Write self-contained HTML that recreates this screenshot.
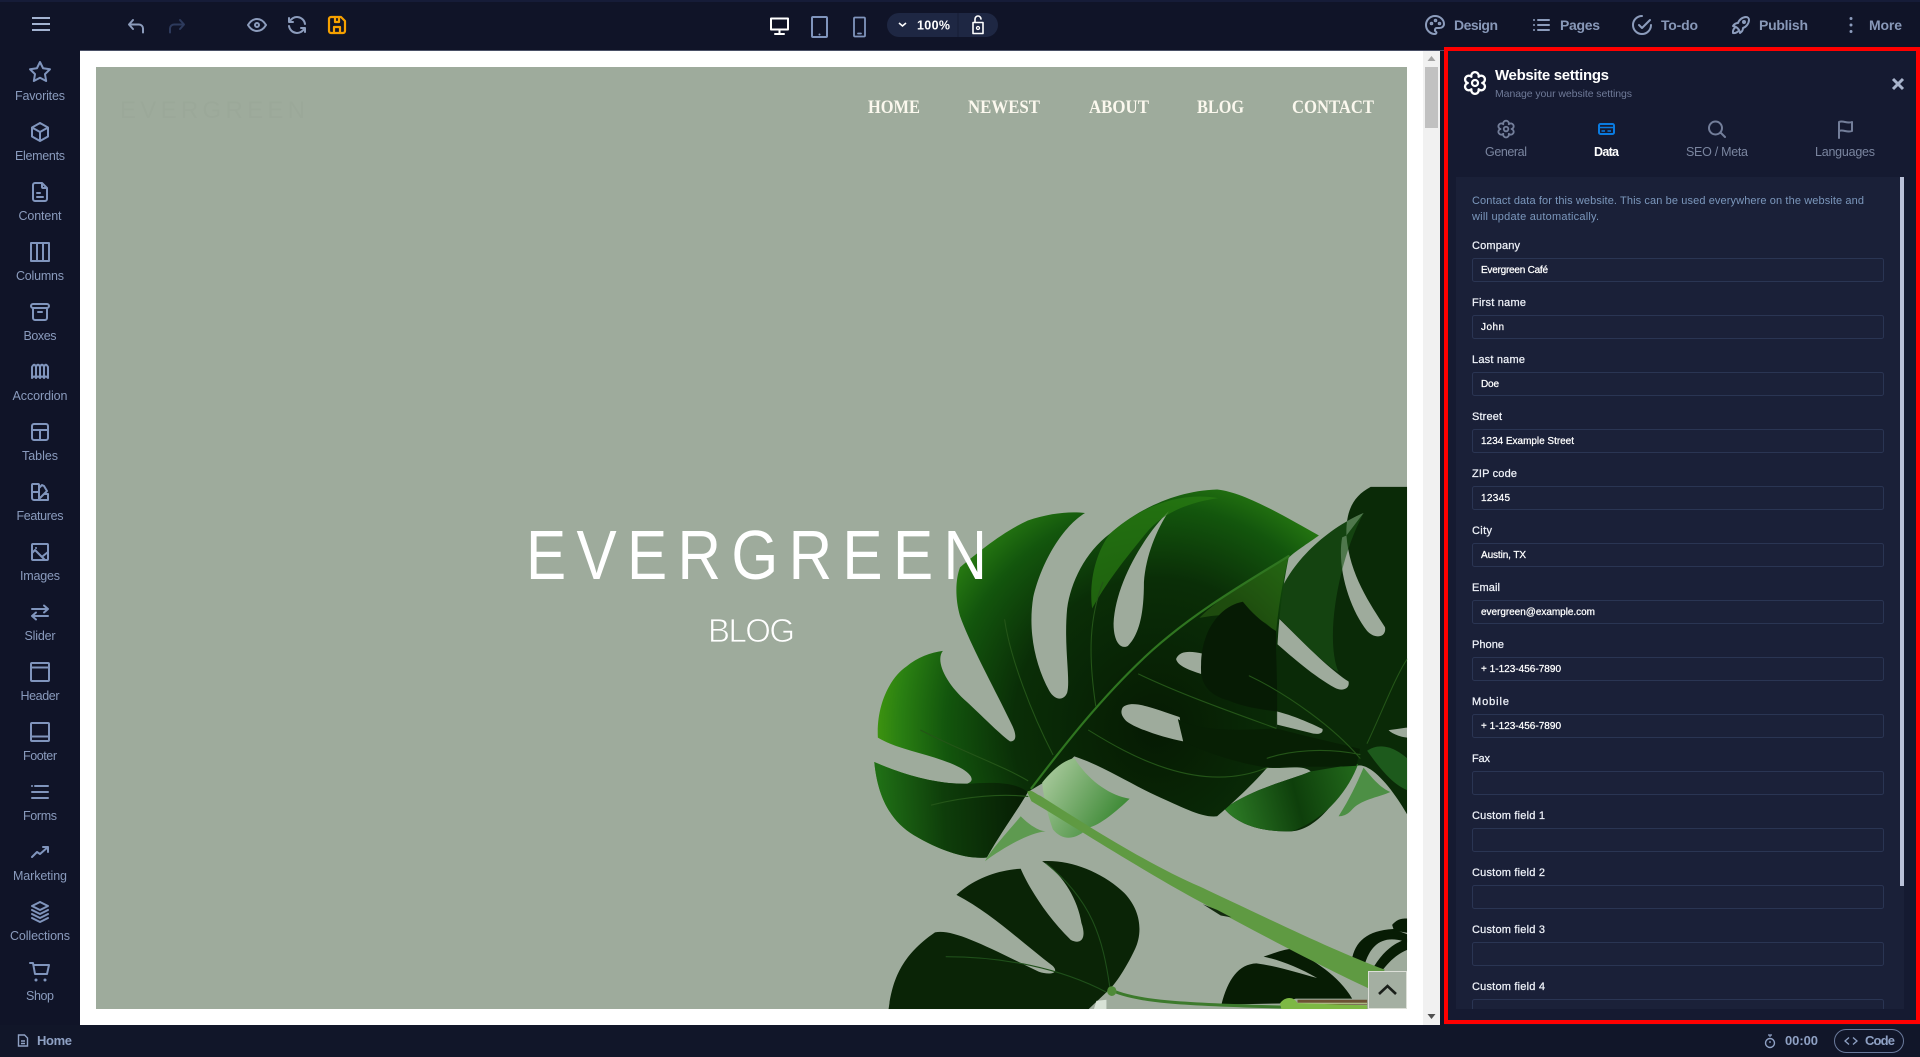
<!DOCTYPE html>
<html lang="en"><head><meta charset="utf-8"><title>Website settings</title>
<style>
html,body{margin:0;padding:0;background:#101428;overflow:hidden}
svg{display:block;position:absolute;left:0;top:0}
text{font-family:"Liberation Sans",sans-serif}
.side text{fill:#8a9bbd;font-size:12.5px;text-anchor:middle}
.ic{fill:none;stroke-width:2;stroke-linecap:round;stroke-linejoin:round}
.side .ic{stroke:#8095bd}
.top .ic{stroke:#8c9cbc}
.tn{fill:#8898b8;font-size:14px;font-weight:bold}
.tab{fill:#7a859f;font-size:12.5px;text-anchor:middle}
.lb{fill:#eef1f8;font-size:11px;stroke:#eef1f8;stroke-width:.25px}
.vl{fill:#fff;font-size:10px;stroke:#fff;stroke-width:.25px}
.in{fill:#1b2139;stroke:#2a3553;stroke-width:1}
</style></head><body>
<svg width="1920" height="1057" viewBox="0 0 1920 1057" xmlns="http://www.w3.org/2000/svg">
<defs>
<radialGradient id="g1" gradientUnits="userSpaceOnUse" cx="830" cy="690" r="800">
<stop offset="0" stop-color="#061a03"/><stop offset=".5" stop-color="#0a2e07"/><stop offset=".74" stop-color="#13560d"/><stop offset=".9" stop-color="#2a8012"/><stop offset="1" stop-color="#42980f"/>
</radialGradient>
<linearGradient id="g2" gradientUnits="userSpaceOnUse" x1="1030" y1="900" x2="1400" y2="800">
<stop offset="0" stop-color="#2c7a25"/><stop offset=".5" stop-color="#0e3f0b"/><stop offset="1" stop-color="#236b1c"/>
</linearGradient>
<linearGradient id="g3" gradientUnits="userSpaceOnUse" x1="520" y1="800" x2="720" y2="930">
<stop offset="0" stop-color="#a8c99c"/><stop offset="1" stop-color="#3e8a36"/>
</linearGradient>
<linearGradient id="g4" gradientUnits="userSpaceOnUse" x1="450" y1="880" x2="60" y2="900">
<stop offset="0" stop-color="#071f04"/><stop offset=".55" stop-color="#0e3d0a"/><stop offset="1" stop-color="#1f6e15"/>
</linearGradient>
<clipPath id="pc"><rect x="1456" y="177" width="448" height="832"/></clipPath>
<clipPath id="lc"><rect x="0" y="0" width="1532" height="1440"/></clipPath>
</defs>

<!-- base -->
<rect width="1920" height="1057" fill="#101428"/>
<rect x="0" y="0" width="1920" height="2" fill="#161c38"/>
<rect x="80" y="50" width="1364" height="1" fill="#4a5066"/>
<rect x="80" y="51" width="1343" height="974" fill="#fff"/>
<rect x="96" y="67" width="1311" height="942" fill="#9eab9c"/>
<rect x="0" y="1025" width="1920" height="32" fill="#111629"/>

<!-- scrollbar -->
<rect x="1423" y="51" width="17" height="974" fill="#f1f1f1"/>
<path d="M1431.5 56l4 5h-8z" fill="#a3a3a3"/>
<rect x="1425" y="67" width="13" height="61" fill="#c1c1c1"/>
<path d="M1427.5 1014h8l-4 5z" fill="#505050"/>

<!-- page content -->
<text x="120" y="118" font-size="24" textLength="185" fill="#97a495" opacity=".35">EVERGREEN</text>
<g font-size="18.5" font-weight="bold" fill="#fbf8ee">
<text x="868" y="113" textLength="52" lengthAdjust="spacingAndGlyphs" style="font-family:'Liberation Serif',serif">HOME</text>
<text x="968" y="113" textLength="72" lengthAdjust="spacingAndGlyphs" style="font-family:'Liberation Serif',serif">NEWEST</text>
<text x="1089" y="113" textLength="60" lengthAdjust="spacingAndGlyphs" style="font-family:'Liberation Serif',serif">ABOUT</text>
<text x="1197" y="113" textLength="47" lengthAdjust="spacingAndGlyphs" style="font-family:'Liberation Serif',serif">BLOG</text>
<text x="1292" y="113" textLength="82" lengthAdjust="spacingAndGlyphs" style="font-family:'Liberation Serif',serif">CONTACT</text>
</g>

<!-- leaves -->
<svg x="860" y="470" width="560" height="587" viewBox="0 0 1568 1568" preserveAspectRatio="none">
<g clip-path="url(#lc)">
<!-- far right leaf -->
<path fill="#0a2a07" d="M1410 115C1300 160 1190 260 1165 360L1165 700L1140 795C1180 800 1240 785 1262 805C1200 830 1100 850 1020 905C1060 950 1130 968 1210 965C1280 960 1340 880 1390 790C1430 780 1490 850 1532 920L1532 45L1430 45C1380 70 1360 110 1362 175Z M1168 392C1230 450 1310 530 1368 565C1372 585 1350 592 1330 582C1270 550 1210 500 1165 462Z M1350 180C1335 260 1370 370 1420 430C1445 455 1475 445 1470 420C1430 360 1370 280 1362 175Z M1168 645C1210 655 1260 675 1295 692C1298 705 1280 708 1260 702L1168 680Z M1480 695L1532 688L1532 715C1510 712 1490 705 1480 695Z" fill-rule="evenodd"/>
<path fill="url(#g2)" d="M1020 905C1100 850 1200 830 1262 805C1300 800 1350 790 1395 785C1370 850 1310 930 1210 965C1130 968 1060 950 1020 905Z"/>
<path fill="#1b5518" opacity=".6" d="M1410 115C1300 160 1190 260 1165 360L1170 392C1230 450 1300 520 1340 540C1300 450 1340 240 1410 115Z"/>
<path fill="#1d5a1c" d="M1420 750C1450 730 1490 735 1532 770L1532 855C1490 840 1450 790 1420 750Z"/>
<path fill="#4d8f45" d="M1410 795C1440 830 1460 850 1485 860C1450 875 1400 880 1375 910C1360 925 1345 925 1340 925C1370 880 1390 840 1410 795Z"/>
<!-- main leaf -->
<path fill="url(#g1)" fill-rule="evenodd" d="M470 860C440 910 400 960 355 1035C300 1040 230 1020 150 975C90 940 50 880 40 780C100 805 200 840 300 838C325 830 310 810 280 795C210 760 110 750 50 715C45 620 90 550 130 525C160 500 200 487 232 483C210 510 240 570 300 620C340 655 385 700 420 725C440 725 438 705 425 680C380 590 310 470 280 390C265 340 268 290 280 260C330 220 400 165 470 135C530 115 590 110 630 115C570 150 510 240 485 340C470 430 490 520 530 590C545 615 570 618 580 595C590 560 570 470 580 370C590 300 630 220 700 170C770 110 880 55 1000 52C1080 60 1200 130 1285 175C1240 205 1215 220 1200 235C1180 330 1165 440 1165 600L1165 690C1150 730 1150 770 1140 795C1090 850 1030 900 1000 925C960 930 900 900 830 870C760 840 680 790 600 765L540 820Z M865 110C800 170 715 300 710 410C710 460 730 480 750 470C780 440 795 390 795 300C800 230 830 160 865 110Z M735 635C760 610 830 640 895 660L905 725C850 715 770 690 745 670C730 655 730 645 735 635Z M885 505C895 480 930 485 958 490L955 545C925 535 890 525 885 505Z"/>
<path fill="url(#g4)" d="M470 860C440 910 400 960 355 1035C300 1040 230 1020 150 975C90 940 50 880 40 780C100 805 200 840 300 838C360 835 430 830 470 860Z"/>
<path fill="#2a7c12" d="M700 170C770 110 880 55 1003 75C930 85 850 110 800 170C740 240 690 300 650 370C640 300 660 220 700 170Z" opacity=".7"/>
<path fill="#4f9420" opacity=".3" d="M1200 232C1100 290 1020 330 950 395C1040 380 1130 380 1165 440C1170 370 1185 290 1200 232Z"/>
<!-- overlapping dark leaf -->
<path fill="#061b04" d="M1072 352C1000 365 955 440 955 520C952 570 975 600 1030 615C1080 635 1130 640 1168 645L1168 600L1165 460L1165 430C1130 410 1100 385 1072 352Z"/>
<path fill="#071f04" d="M890 665C930 690 1020 700 1165 690C1200 700 1290 720 1400 745L1390 790C1340 795 1200 790 1140 795C1040 780 960 750 905 725Z"/>
<!-- veins -->
<g fill="none" stroke-linecap="round">
<path stroke="#2f7520" stroke-width="6" d="M480 850C560 750 680 600 820 480C950 370 1100 290 1200 230"/>
<path stroke="#245518" stroke-width="3" d="M640 695C750 760 950 870 1140 795M780 545C900 600 1050 650 1165 690M470 872C400 865 300 870 200 895M470 830C400 790 280 750 170 695M540 760C480 650 420 500 405 400M660 630C640 500 640 400 680 300M1400 770C1330 690 1200 600 1090 550M1400 760C1300 740 1200 750 1140 770M1420 730C1460 650 1500 550 1532 505"/>
</g>
<!-- small leaflets -->
<path fill="url(#g3)" d="M510 835C540 800 570 775 600 770C640 830 700 870 755 878C720 910 670 950 640 955C610 985 570 995 540 960C525 920 515 880 510 835Z"/>
<path fill="#5e9a50" d="M450 925C470 945 500 965 520 965C470 970 400 1010 350 1045C370 1010 420 960 450 925Z"/>
<!-- bottom leaf -->
<path fill="#0a2406" d="M80 1440C90 1370 110 1300 210 1235C260 1225 350 1270 500 1340C530 1350 560 1345 540 1325C450 1260 370 1185 270 1135C320 1090 390 1068 450 1065C470 1110 520 1190 590 1255C620 1270 635 1250 620 1210C610 1150 570 1080 510 1045C590 1040 680 1075 740 1130C790 1180 790 1240 770 1280C740 1340 710 1380 690 1395L640 1440Z"/>
<path fill="none" stroke="#1f4f1a" stroke-width="3" d="M700 1385C680 1250 650 1150 520 1050M690 1395C560 1330 400 1300 240 1300"/>
<path fill="#d8e2d6" d="M662 1418L690 1415L690 1440L655 1440Z"/>
<!-- bottom right leaf -->
<path fill="#071c04" d="M1012 1428C1030 1360 1060 1320 1110 1318C1170 1325 1230 1345 1280 1357C1230 1330 1180 1310 1130 1300C1160 1290 1190 1280 1209 1279C1270 1310 1340 1350 1378 1412L1220 1412L1175 1425Z"/>
<path fill="#071c04" d="M1377 1310C1385 1260 1420 1230 1493 1226L1532 1240L1532 1262C1470 1240 1430 1262 1412 1325Z"/>
<path fill="#071c04" d="M1440 1325C1470 1280 1500 1262 1532 1252L1532 1282C1500 1295 1480 1315 1460 1340Z"/>
<path fill="#071c04" d="M1490 1215C1505 1198 1520 1198 1532 1198V1236L1495 1230Z"/>
<!-- stem -->
<path fill="#5f9a42" d="M468 860C480 850 490 865 505 870C620 940 800 1050 952 1113C1180 1215 1330 1285 1470 1335L1425 1385C1300 1330 1120 1240 952 1153C800 1075 620 965 480 885Z"/>
<path fill="#13290e" d="M960 1160L1010 1190L1040 1195L1000 1175Z"/>
<!-- lower stem -->
<path fill="none" stroke="#3c7a2c" stroke-width="8" d="M695 1385C760 1420 900 1428 1200 1435"/>
<circle cx="705" cy="1392" r="13" fill="#4f8a38"/>
<path fill="#6c5234" d="M1225 1415H1420V1428H1225Z"/>
<path fill="#b4c890" d="M1225 1423H1420V1426H1225Z"/>
<path fill="#7db844" d="M1176 1425C1188 1408 1212 1404 1225 1424L1420 1430V1440H1180Z"/>
</g>
</svg>

<!-- hero text above the image -->
<text transform="translate(526,579) scale(.86,1)" font-size="70" fill="#fff" textLength="536">EVERGREEN</text>
<text x="708" y="642" font-size="33" fill="#fff" stroke="#9eab9c" stroke-width=".8" textLength="87">BLOG</text>

<!-- scroll to top -->
<rect x="1368.5" y="971.5" width="38" height="37" fill="#a4afa2" stroke="#dcdfd8"/>
<path d="M1379 994l8.500-8 8.500 8" fill="none" stroke="#1a1f1a" stroke-width="2.600"/>

<!-- top toolbar -->
<g class="top">
<path d="M32 18h18M32 24h18M32 30h18" stroke="#a3b3d1" stroke-width="2" fill="none"/>
<path class="ic" transform="translate(124,13)" d="M9 7l-4 4.500 4 4.500M5 11.500h10a4 4 0 0 1 4 4v4" />
<path class="ic" transform="translate(165,13)" style="stroke:#2d3a5c" d="M15 7l4 4.500-4 4.500M19 11.500h-10a4 4 0 0 0-4 4v4"/>
<path class="ic" transform="translate(245,13)" d="M10 12a2 2 0 1 0 4 0a2 2 0 0 0-4 0M21 12c-2.400 4-5.400 6-9 6c-3.600 0-6.600-2-9-6c2.400-4 5.400-6 9-6c3.600 0 6.600 2 9 6"/>
<path class="ic" transform="translate(285,13)" d="M20 11a8.100 8.100 0 0 0-15.500-2m-.5-4v4h4M4 13a8.100 8.100 0 0 0 15.500 2m.5 4v-4h-4"/>
<path class="ic" transform="translate(325,13)" style="stroke:#f5a000;stroke-width:2.200" d="M6 4h10l4 4v10a2 2 0 0 1-2 2h-12a2 2 0 0 1-2-2v-12a2 2 0 0 1 2-2M14 4v5h-4V4M9 20v-6h6v6"/>

<!-- devices -->
<path class="ic" style="stroke:#fff" d="M771 18.500h17v11h-17zM775 34h9M779.500 30v4"/>
<path class="ic" style="stroke:#8095bd" d="M813 17h13a1 1 0 0 1 1 1v18a1 1 0 0 1-1 1h-13a1 1 0 0 1-1-1v-18a1 1 0 0 1 1-1zM819.500 34.500v.01"/>
<path class="ic" style="stroke:#8095bd;stroke-width:1.800" d="M855 17.500h9a1 1 0 0 1 1 1v17a1 1 0 0 1-1 1h-9a1 1 0 0 1-1-1v-17a1 1 0 0 1 1-1zM858 33.500h3"/>
<rect x="887" y="13" width="111" height="24" rx="12" fill="#1e2743"/>
<rect x="957.500" y="13" width="1" height="24" fill="#161d36"/>
<path d="M899 23l3.500 3 3.500-3" fill="none" stroke="#fff" stroke-width="1.600"/>
<text x="917" y="29.500" font-size="12.500" font-weight="bold" fill="#fff" textLength="33">100%</text>
<path class="ic" style="stroke:#fff;stroke-width:1.600" d="M973 22.500h10v11h-10zM975 22v-3a3 3 0 0 1 6 0"/>
<circle cx="978" cy="28" r="1.500" fill="none" stroke="#fff" stroke-width="1.300"/>

<!-- right menu -->
<g transform="translate(1423,13)" class="ic" stroke="#8c9cbc">
<path d="M12 21a9 9 0 0 1 0-18c4.970 0 9 3.582 9 8c0 1.060-.474 2.078-1.318 2.828c-.844.750-1.989 1.172-3.182 1.172h-2.500a2 2 0 0 0-1 3.750a1.300 1.300 0 0 1-1 2.250"/>
<circle cx="8.500" cy="10.500" r=".8"/><circle cx="12.500" cy="7.500" r=".8"/><circle cx="16.500" cy="10.500" r=".8"/>
</g>
<text class="tn" x="1454" y="30" textLength="44">Design</text>
<path class="ic" d="M1534 20h.01M1534 25h.01M1534 30h.01M1538 20h11M1538 25h11M1538 30h11"/>
<text class="tn" x="1560" y="30" textLength="40">Pages</text>
<g transform="translate(1630,13)" class="ic" stroke="#8c9cbc"><path d="M12 3a9 9 0 1 0 9 9M9 12l3 3l8-8"/></g>
<text class="tn" x="1661" y="30" textLength="37">To-do</text>
<g transform="translate(1729,13)" class="ic" stroke="#8c9cbc"><path d="M4 13a8 8 0 0 1 7 7a6 6 0 0 0 3-5a9 9 0 0 0 6-8a3 3 0 0 0-3-3a9 9 0 0 0-8 6a6 6 0 0 0-5 3M7 14a6 6 0 0 0-3 6a6 6 0 0 0 6-3"/><circle cx="15" cy="9" r="1"/></g>
<text class="tn" x="1759" y="30" textLength="49">Publish</text>
<path d="M1851 18.500v.01M1851 25v.01M1851 31.500v.01" fill="none" stroke="#8c9cbc" stroke-width="3" stroke-linecap="round"/>
<text class="tn" x="1869" y="30" textLength="33">More</text>
</g>

<!-- left sidebar -->
<g class="side">
<path class="ic" transform="translate(28,60)" d="M12 17.750l-6.172 3.245l1.179-6.873l-5-4.867l6.900-1l3.086-6.253l3.086 6.253l6.900 1l-5 4.867l1.179 6.873z"/>
<text x="40" y="100" textLength="50">Favorites</text>
<path class="ic" transform="translate(28,120)" d="M12 3l8 4.500v9l-8 4.500l-8-4.500v-9l8-4.500M12 12l8-4.500M12 12v9M12 12l-8-4.500"/>
<text x="40" y="160" textLength="50">Elements</text>
<path class="ic" transform="translate(28,180)" d="M14 3v4a1 1 0 0 0 1 1h4M17 21h-10a2 2 0 0 1-2-2v-14a2 2 0 0 1 2-2h7l5 5v11a2 2 0 0 1-2 2zM9 17h6M9 13h3"/>
<text x="40" y="220" textLength="43">Content</text>
<path class="ic" transform="translate(28,240)" d="M3 3h18v18h-18zM9 3v18M15 3v18"/>
<text x="40" y="280" textLength="48">Columns</text>
<path class="ic" transform="translate(28,300)" d="M3 6a2 2 0 0 1 2-2h14a2 2 0 0 1 2 2v0a2 2 0 0 1-2 2h-14a2 2 0 0 1-2-2zM5 8v10a2 2 0 0 0 2 2h10a2 2 0 0 0 2-2v-10M10 12h4"/>
<text x="40" y="340" textLength="33">Boxes</text>
<path class="ic" transform="translate(28,360)" d="M4 7c1.500-3 3-3 4 0c1-3 3-3 4 0c1-3 3-3 4 0c1-3 2.500-3 4 0v11c-1.500-2-3-2-4 0c-1-2-3-2-4 0c-1-2-3-2-4 0c-1-2-2.500-2-4 0zM8 7v11M12 7v11M16 7v11"/>
<text x="40" y="400" textLength="55">Accordion</text>
<path class="ic" transform="translate(28,420)" d="M4 6a2 2 0 0 1 2-2h12a2 2 0 0 1 2 2v12a2 2 0 0 1-2 2h-12a2 2 0 0 1-2-2zM4 10h16M12 10v10"/>
<text x="40" y="460" textLength="36">Tables</text>
<path class="ic" transform="translate(28,480)" d="M4 5a1 1 0 0 1 1-1h5a1 1 0 0 1 1 1v15h-5a2 2 0 0 1-2-2zM4 12h7M11 8l3-3 2 1 3 5-8 8M11 20h9v-6h-4"/>
<text x="40" y="520" textLength="47">Features</text>
<path class="ic" transform="translate(28,540)" d="M4 5a1 1 0 0 1 1-1h14a1 1 0 0 1 1 1v14a1 1 0 0 1-1 1h-14a1 1 0 0 1-1-1zM4 13l3-3 10 10M15 16l5-4M8 8h.01"/>
<text x="40" y="580" textLength="40">Images</text>
<path class="ic" transform="translate(28,600)" d="M4 9h16M16 5.500l4 3.500-4 3.500M20 16h-16M8 12.500l-4 3.500 4 3.500"/>
<text x="40" y="640" textLength="31">Slider</text>
<path class="ic" transform="translate(28,660)" d="M3 4a1 1 0 0 1 1-1h16a1 1 0 0 1 1 1v16a1 1 0 0 1-1 1h-16a1 1 0 0 1-1-1zM3 7.500h18"/>
<text x="40" y="700" textLength="39">Header</text>
<path class="ic" transform="translate(28,720)" d="M3 4a1 1 0 0 1 1-1h16a1 1 0 0 1 1 1v16a1 1 0 0 1-1 1h-16a1 1 0 0 1-1-1zM3 16.500h18"/>
<text x="40" y="760" textLength="34">Footer</text>
<path class="ic" transform="translate(28,780)" d="M4 6h.01M7 6h13M4 12h16M4 18h16"/>
<text x="40" y="820" textLength="34">Forms</text>
<path class="ic" transform="translate(28,840)" d="M4 17l5-5l3 2l8-7M15 7h5v5"/>
<text x="40" y="880" textLength="54">Marketing</text>
<path class="ic" transform="translate(28,900)" d="M12 2l-8 4l8 4l8-4l-8-4M4 10l8 4l8-4M4 18l8 4l8-4M4 14l8 4l8-4"/>
<text x="40" y="940" textLength="60">Collections</text>
<path class="ic" transform="translate(28,960)" d="M2 3h3l2 11h12l2-9h-15"/>
<circle cx="36" cy="980" r="1.500" fill="#8095bd"/><circle cx="45" cy="980" r="1.500" fill="#8095bd"/>
<text x="40" y="1000" textLength="28">Shop</text>
</g>

<!-- settings panel -->
<rect x="1444" y="47" width="476" height="978" fill="#151a31"/>
<rect x="1456" y="177" width="448" height="832" fill="#1a2038"/>
<rect x="1900" y="177" width="4" height="709" fill="#b9c0d8"/>
<path transform="translate(1460.600,68.600) scale(1.200)" d="M15 6.800A3.100 3.100 0 1 1 18 12A3.100 3.100 0 1 1 15 17.200A3.100 3.100 0 1 1 9 17.200A3.100 3.100 0 1 1 6 12A3.100 3.100 0 1 1 9 6.800A3.100 3.100 0 1 1 15 6.800ZM14.500 12a2.500 2.500 0 1 1-5 0a2.500 2.500 0 0 1 5 0Z" fill="none" stroke="#fff" stroke-width="1.900" stroke-linejoin="round"/>
<text x="1495" y="80" font-size="15" font-weight="bold" fill="#fff" textLength="114">Website settings</text>
<text x="1495" y="97" font-size="10.500" fill="#6f7a98" textLength="137">Manage your website settings</text>
<path d="M1893 79l10 10M1903 79l-10 10" stroke="#a9b4cc" stroke-width="3" fill="none"/>

<g>
<path transform="translate(1495,118) scale(.92)" d="M15 6.800A3.100 3.100 0 1 1 18 12A3.100 3.100 0 1 1 15 17.200A3.100 3.100 0 1 1 9 17.200A3.100 3.100 0 1 1 6 12A3.100 3.100 0 1 1 9 6.800A3.100 3.100 0 1 1 15 6.800ZM14.500 12a2.500 2.500 0 1 1-5 0a2.500 2.500 0 0 1 5 0Z" fill="none" stroke="#737e9a" stroke-width="2" stroke-linejoin="round"/>
<text class="tab" x="1506" y="156" textLength="42">General</text>
<rect x="1599" y="124" width="15" height="10" rx="1.500" fill="none" stroke="#0a7be0" stroke-width="2"/>
<path d="M1598 127.500h17M1601.500 131h3.500M1607.500 131h3.500" stroke="#0a7be0" stroke-width="1.500" fill="none"/>
<text class="tab" x="1606.500" y="156" font-weight="bold" style="fill:#fff" textLength="25">Data</text>
<path class="ic" style="stroke:#737e9a" transform="translate(1705,117)" d="M17 11a6.500 6.500 0 1 1-13 0a6.500 6.500 0 0 1 13 0M20 20l-4.500-4.500"/>
<text class="tab" x="1717" y="156" textLength="62">SEO / Meta</text>
<path class="ic" style="stroke:#737e9a" transform="translate(1833,117)" d="M6 21v-16c4-2 8 2 13 0v9c-5 2-9-2-13 0"/>
<text class="tab" x="1845" y="156" textLength="60">Languages</text>
</g>

<text x="1472" y="204" font-size="11" fill="#7b97bc" textLength="392">Contact data for this website. This can be used everywhere on the website and</text>
<text x="1472" y="220" font-size="11" fill="#7b97bc" textLength="127">will update automatically.</text>

<g clip-path="url(#pc)">
<text class="lb" x="1472" y="249" textLength="48">Company</text>
<rect class="in" x="1472.500" y="258.500" width="411" height="23" rx="2"/>
<text class="vl" x="1481" y="273" textLength="67">Evergreen Café</text>
<text class="lb" x="1472" y="306" textLength="54">First name</text>
<rect class="in" x="1472.500" y="315.500" width="411" height="23" rx="2"/>
<text class="vl" x="1481" y="330" textLength="23">John</text>
<text class="lb" x="1472" y="363" textLength="53">Last name</text>
<rect class="in" x="1472.500" y="372.500" width="411" height="23" rx="2"/>
<text class="vl" x="1481" y="387" textLength="18">Doe</text>
<text class="lb" x="1472" y="420" textLength="30">Street</text>
<rect class="in" x="1472.500" y="429.500" width="411" height="23" rx="2"/>
<text class="vl" x="1481" y="444" textLength="93">1234 Example Street</text>
<text class="lb" x="1472" y="477" textLength="45">ZIP code</text>
<rect class="in" x="1472.500" y="486.500" width="411" height="23" rx="2"/>
<text class="vl" x="1481" y="501" textLength="29">12345</text>
<text class="lb" x="1472" y="534" textLength="20">City</text>
<rect class="in" x="1472.500" y="543.500" width="411" height="23" rx="2"/>
<text class="vl" x="1481" y="558" textLength="45">Austin, TX</text>
<text class="lb" x="1472" y="591" textLength="28">Email</text>
<rect class="in" x="1472.500" y="600.500" width="411" height="23" rx="2"/>
<text class="vl" x="1481" y="615" textLength="114">evergreen@example.com</text>
<text class="lb" x="1472" y="648" textLength="32">Phone</text>
<rect class="in" x="1472.500" y="657.500" width="411" height="23" rx="2"/>
<text class="vl" x="1481" y="672" textLength="80">+ 1-123-456-7890</text>
<text class="lb" x="1472" y="705" textLength="37">Mobile</text>
<rect class="in" x="1472.500" y="714.500" width="411" height="23" rx="2"/>
<text class="vl" x="1481" y="729" textLength="80">+ 1-123-456-7890</text>
<text class="lb" x="1472" y="762" textLength="18">Fax</text>
<rect class="in" x="1472.500" y="771.500" width="411" height="23" rx="2"/>
<text class="lb" x="1472" y="819" textLength="73">Custom field 1</text>
<rect class="in" x="1472.500" y="828.500" width="411" height="23" rx="2"/>
<text class="lb" x="1472" y="876" textLength="73">Custom field 2</text>
<rect class="in" x="1472.500" y="885.500" width="411" height="23" rx="2"/>
<text class="lb" x="1472" y="933" textLength="73">Custom field 3</text>
<rect class="in" x="1472.500" y="942.500" width="411" height="23" rx="2"/>
<text class="lb" x="1472" y="990" textLength="73">Custom field 4</text>
<rect class="in" x="1472.500" y="999.500" width="411" height="23" rx="2"/>
</g>

<!-- red highlight -->
<rect x="1446" y="49" width="472" height="973" fill="none" stroke="#f00" stroke-width="4"/>

<!-- bottom bar -->
<path d="M18.500 1035h6l3 3v8h-9zM21 1041h4M21 1043.500h4" fill="none" stroke="#8fa1c4" stroke-width="1.400"/>
<text x="37" y="1045" font-size="13" font-weight="bold" fill="#8fa1c4" textLength="35">Home</text>
<circle cx="1770" cy="1043" r="4.500" fill="none" stroke="#8fa1c4" stroke-width="1.400"/>
<path d="M1770 1037v-2M1768 1035h4M1770 1043v-2" stroke="#8fa1c4" stroke-width="1.200" fill="none"/>
<text x="1785" y="1045" font-size="13" font-weight="bold" fill="#8fa1c4" textLength="33">00:00</text>
<rect x="1834.500" y="1029.500" width="69" height="23" rx="11.500" fill="none" stroke="#6a7a9c"/>
<path d="M1849 1037.500l-4 3.500 4 3.500M1853 1037.500l4 3.500-4 3.500" fill="none" stroke="#8fa1c4" stroke-width="1.300"/>
<text x="1865" y="1045" font-size="13" font-weight="bold" fill="#8fa1c4" textLength="30">Code</text>
</svg>
</body></html>
